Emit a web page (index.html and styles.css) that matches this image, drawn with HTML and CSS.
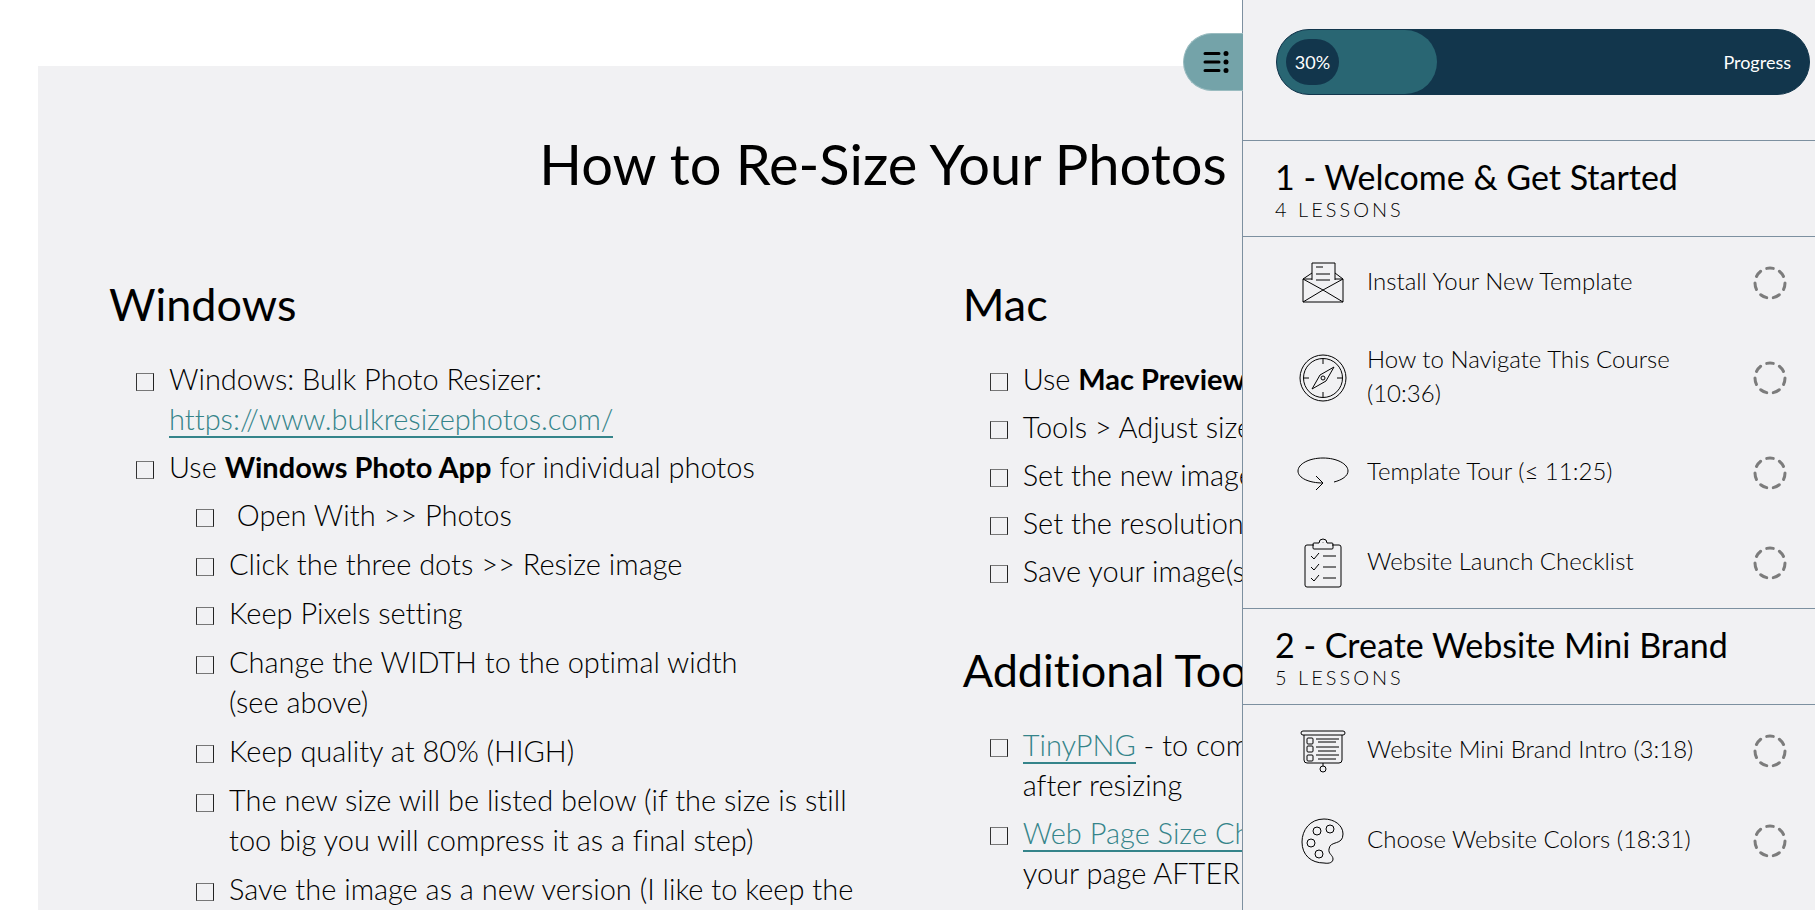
FILE: index.html
```html
<!DOCTYPE html>
<html lang="en">
<head>
  <meta charset="UTF-8" />
  <title>How to Re-Size Your Photos</title>
  <link rel="stylesheet" href="styles.css">
</head>
<body>

  <!-- Lesson content -->
  <main>
    <article class="lesson">
      <h1>How to Re-Size Your Photos</h1>

      <div class="columns">
        <section>
          <h2>Windows</h2>
          <ul class="checklist">
            <li>Windows: Bulk Photo Resizer:<br><a href="https://www.bulkresizephotos.com/">https://www.bulkresizephotos.com/</a></li>
            <li>Use <strong>Windows Photo App</strong> for individual photos
              <ul>
                <li>&nbsp;Open With &gt;&gt; Photos</li>
                <li>Click the three dots &gt;&gt; Resize image</li>
                <li>Keep Pixels setting</li>
                <li>Change the WIDTH to the optimal width<br>(see above)</li>
                <li>Keep quality at 80% (HIGH)</li>
                <li>The new size will be listed below (if the size is still<br>too big you will compress it as a final step)</li>
                <li>Save the image as a new version (I like to keep the</li>
              </ul>
            </li>
          </ul>
        </section>

        <section>
          <h2>Mac</h2>
          <ul class="checklist">
            <li>Use <strong>Mac Preview</strong></li>
            <li>Tools &gt; Adjust size</li>
            <li>Set the new image width</li>
            <li>Set the resolution</li>
            <li>Save your image(s)</li>
          </ul>

          <h2>Additional Tools</h2>
          <ul class="checklist">
            <li><a href="#tinypng">TinyPNG</a> - to compress images<br>after resizing</li>
            <li><a href="#checker">Web Page Size Checker</a> - test<br>your page AFTER</li>
          </ul>
        </section>
      </div>
    </article>
  </main>

  <!-- Course menu -->
  <aside class="sidebar">
    <button class="toggle" type="button" aria-label="Toggle course menu">
      <svg width="26" height="24" viewBox="0 0 26 24" stroke="#000" stroke-width="3" stroke-linecap="round">
        <path d="M2 3.500h14M2 12h14M2 20.500h14" />
        <path d="M23 3.500h.01M23 12h.01M23 20.500h.01" stroke-width="5" />
      </svg>
    </button>

    <div class="progress">
      <div class="progress-fill" style="width: 30%"><span class="percent">30%</span></div>
      <span class="progress-label">Progress</span>
    </div>

    <nav>
      <div class="chapter">
        <h3>1 - Welcome &amp; Get Started</h3>
        <p>4 LESSONS</p>
      </div>
      <ul class="lessons">
        <li>
          <svg class="icon" viewBox="0 0 52 52">
            <path d="M15 23V6h23v17M19 10h7M19 17h14M19 23h14M15 16L6 22v23h40V22l-8-6M6 22l20 11 20-11M6 45l20-12 20 12M6 22h9M38 22h8" />
          </svg>
          <a href="#install">Install Your New Template</a>
          <svg class="status" viewBox="0 0 34 34"><circle cx="17" cy="17" r="15" pathLength="70" /></svg>
        </li>
        <li>
          <svg class="icon" viewBox="0 0 52 52">
            <circle cx="26" cy="26" r="23" />
            <circle cx="26" cy="26" r="19.500" />
            <circle cx="26" cy="26" r="2" />
            <path d="M37 15L29 29 15 37l8-14zM26 7v5M26 40v5M7 26h5M40 26h5" />
          </svg>
          <a href="#navigate">How to Navigate This Course<br>(10:36)</a>
          <svg class="status" viewBox="0 0 34 34"><circle cx="17" cy="17" r="15" pathLength="70" /></svg>
        </li>
        <li>
          <svg class="icon" viewBox="0 0 52 52">
            <path d="M26 36C12 36 1 31 1 24S12 11 26 11s25 6 25 13c0 5-6 9-14 11M19 29l7 7-7 7" />
          </svg>
          <a href="#tour">Template Tour (≤ 11:25)</a>
          <svg class="status" viewBox="0 0 34 34"><circle cx="17" cy="17" r="15" pathLength="70" /></svg>
        </li>
        <li>
          <svg class="icon" viewBox="0 0 52 52">
            <path d="M17 8h-7q-2 0-2 2v38q0 2 2 2h32q2 0 2-2V10q0-2-2-2h-7" />
            <path d="M17 6h5q0-4 4-4t4 4h5q1 0 1 1v4q0 1-1 1H17q-1 0-1-1V7q0-1 1-1zM26 5.500v.5" />
            <path d="M14 19l3 3 5-6M14 30l3 3 5-6M14 41l3 3 5-6M26 19h13M26 30h13M26 41h13" />
          </svg>
          <a href="#checklist">Website Launch Checklist</a>
          <svg class="status" viewBox="0 0 34 34"><circle cx="17" cy="17" r="15" pathLength="70" /></svg>
        </li>
      </ul>

      <div class="chapter">
        <h3>2 - Create Website Mini Brand</h3>
        <p>5 LESSONS</p>
      </div>
      <ul class="lessons">
        <li>
          <svg class="icon" viewBox="0 0 52 52">
            <rect x="4" y="6" width="44" height="4" rx="2" />
            <path d="M7 10v25q0 3 3 3h32q3 0 3-3V10M26 38v3" />
            <circle cx="26" cy="44" r="3" />
            <rect x="10" y="13" width="6" height="6" rx="1" />
            <rect x="10" y="21" width="6" height="6" rx="1" />
            <rect x="10" y="30" width="6" height="6" rx="1" />
            <path d="M19 14h23M21 17h18M19 22h23M21 26h18M19 30h23M21 34h18" />
          </svg>
          <a href="#brand">Website Mini Brand Intro (3:18)</a>
          <svg class="status" viewBox="0 0 34 34"><circle cx="17" cy="17" r="15" pathLength="70" /></svg>
        </li>
        <li>
          <svg class="icon" viewBox="0 0 52 52">
            <path d="M27 4C13 4 5 15 5 27c0 13 9 21 22 21 6 1 9-1 9-4 0-4-5-5-4-10 1-9 14-3 14-15C46 10 37 4 27 4z" />
            <circle cx="20" cy="16" r="4" />
            <circle cx="33" cy="14" r="4" />
            <circle cx="14" cy="28" r="4" />
            <circle cx="22" cy="39" r="4" />
          </svg>
          <a href="#colors">Choose Website Colors (18:31)</a>
          <svg class="status" viewBox="0 0 34 34"><circle cx="17" cy="17" r="15" pathLength="70" /></svg>
        </li>
      </ul>
    </nav>
  </aside>

</body>
</html>
```
FILE: styles.css
```css
* {
  box-sizing: border-box;
}

body {
  margin: 0;
  height: 100vh;
  overflow: hidden;
  background: #fff;
  color: #000;
  font-family: Lato, "Open Sans", sans-serif;
  font-weight: 300;
  font-size: 29px;
  line-height: 40px;
  font-variant-ligatures: none;
}

h1, h2, h3, p, ul {
  margin: 0;
  padding: 0;
}

ul {
  list-style: none;
}

h1, h2, h3 {
  font-weight: 400;
}

strong {
  font-weight: 700;
}

/* Lesson content */
main {
  padding: 66px 87px 0 38px;
}

.lesson {
  background: #f1f1f3;
  padding: 63px 71px;
}

h1 {
  font-size: 56px;
  line-height: 70px;
  text-align: center;
  margin-bottom: 76px;
}

h2 {
  font-size: 45px;
  line-height: 58px;
  margin-bottom: 26px;
}

.columns {
  display: grid;
  grid-template-columns: 11fr 10fr;
  gap: 90px;
}

.checklist {
  padding-left: 60px;
  margin-bottom: 50px;
}

.checklist ul {
  padding-left: 60px;
  margin-top: 8px;
}

.checklist > li + li {
  margin-top: 8px;
}

.checklist ul li + li {
  margin-top: 9px;
}

.checklist li::before {
  content: "";
  display: inline-block;
  width: 16px;
  height: 16px;
  margin-left: -33px;
  margin-right: 15px;
  vertical-align: -1px;
  border: 1px solid;
  border-color: #777 #222 #777 #333;
}

.checklist a {
  color: #35848a;
  text-decoration: none;
  border-bottom: 2px solid #35848a;
}

/* Course menu */
.sidebar {
  position: fixed;
  top: 0;
  right: 0;
  bottom: 0;
  width: 573px;
  background: #f1f1f3;
  border-left: 1px solid #7d90a0;
}

.toggle {
  position: absolute;
  top: 33px;
  right: 100%;
  width: 60px;
  height: 58px;
  padding: 0 0 0 5px;
  display: flex;
  align-items: center;
  justify-content: center;
  background: #74a3a9;
  border: 1px solid #9abcc0;
  border-right: 0;
  border-radius: 29px 0 0 29px;
}

.progress {
  display: flex;
  align-items: center;
  justify-content: space-between;
  height: 66px;
  margin: 29px 5px 45px 33px;
  border: 1px solid #12364c;
  border-radius: 33px;
  background: #12364c;
  color: #fff;
  font-size: 18px;
  font-weight: 400;
}

.progress-fill {
  display: flex;
  align-items: center;
  height: 64px;
  padding-left: 9px;
  border-radius: 32px;
  background: #296673;
}

.percent {
  width: 53px;
  line-height: 46px;
  border-radius: 23px;
  text-align: center;
  background: #12364c;
}

.progress-label {
  padding-right: 18px;
}

.chapter {
  height: 97px;
  padding: 16px 32px;
  border-top: 1px solid #7d90a0;
  border-bottom: 1px solid #7d90a0;
}

.chapter h3 {
  font-size: 34px;
  line-height: 40px;
}

.chapter p {
  font-size: 20px;
  line-height: 24px;
  letter-spacing: 3px;
}

.lessons {
  padding-top: 1px;
}

.lessons li {
  display: flex;
  align-items: center;
  min-height: 90px;
  padding: 14px 28px 14px 54px;
}

.lessons a {
  flex: 1;
  padding-bottom: 4px;
  font-size: 24px;
  line-height: 34px;
  color: #000;
  text-decoration: none;
}

.icon {
  width: 52px;
  height: 52px;
  margin-right: 18px;
  fill: none;
  stroke: #000;
}

.status {
  width: 34px;
  height: 34px;
  fill: none;
  stroke: #7c7c7c;
  stroke-width: 3;
  stroke-linecap: round;
  stroke-dasharray: 5 5;
}
```
